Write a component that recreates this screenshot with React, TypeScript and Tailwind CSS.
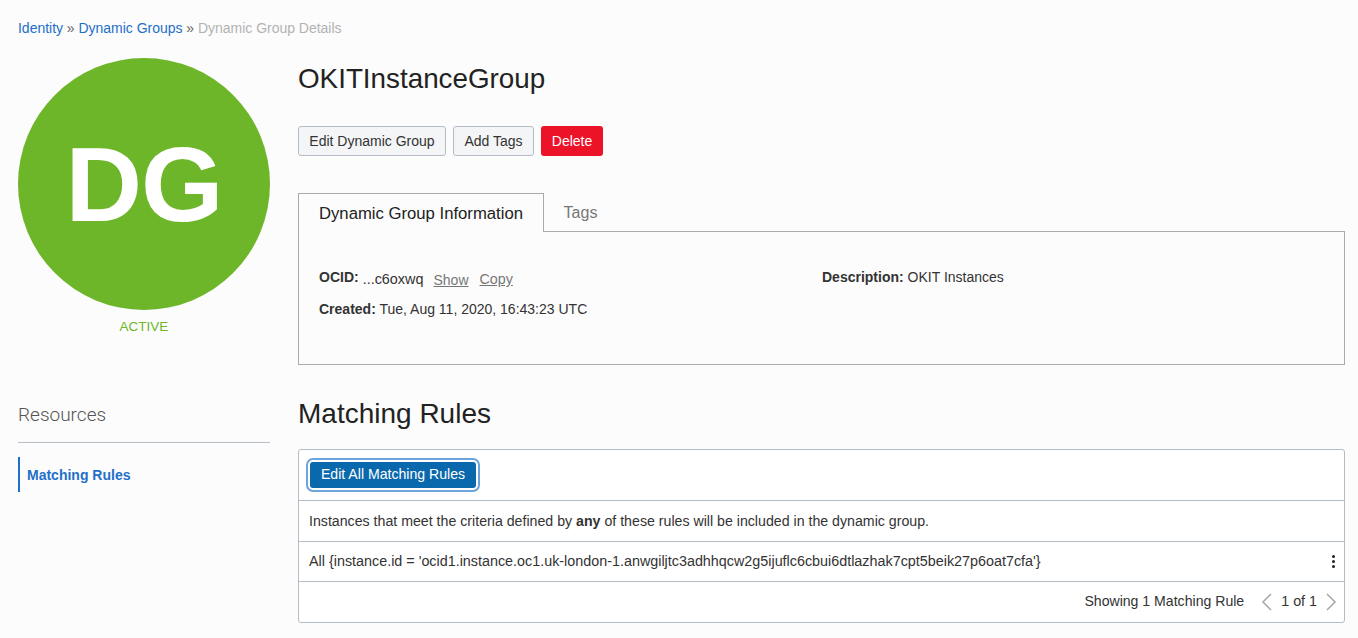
import React from "react";

export default function App() {
  return (
    <div className="w-[1358px] h-[638px] overflow-hidden bg-[#fcfcfc] pl-[18px] pr-[13px] pt-[19px] font-['Liberation_Sans',sans-serif] text-[14px] text-[#333333]">
      {/* Breadcrumbs */}
      <div className="h-[18px] leading-[18px] text-[14px] tracking-[-0.02px] text-[#b3b3b3]">
        <a className="text-[#1f6fc9]">Identity</a>
        <span className="text-[#666666]"> » </span>
        <a className="text-[#1f6fc9]">Dynamic Groups</a>
        <span className="text-[#666666]"> » </span>
        <span>Dynamic Group Details</span>
      </div>

      <div className="flex mt-[21px]">
        {/* Left column */}
        <div className="w-[252px] shrink-0">
          <div className="w-[252px] h-[252px] rounded-full bg-[#6eb629] flex items-center justify-center">
            <span className="text-white font-bold text-[106px] leading-none tracking-[-1px]">DG</span>
          </div>
          <div className="mt-[8px] text-center text-[13.5px] leading-[18px] text-[#6eb629]">ACTIVE</div>

          <div className="mt-[67px] text-[19px] leading-[24px] font-light text-[#555555] font-['Roboto',sans-serif]">Resources</div>
          <div className="mt-[15px] border-t border-[#b4bcc6]"></div>
          <div className="mt-[14px] h-[35px] border-l-2 border-[#1f6fc9] pl-[7px] pt-[2px] flex items-center text-[14px] font-bold text-[#1f6fc9]">
            Matching Rules
          </div>
        </div>

        {/* Main column */}
        <div className="ml-[28px] w-[1047px]">
          <h1 className="mt-[4px] text-[27.8px] leading-[34px] text-[#222222]">OKITInstanceGroup</h1>

          <div className="mt-[30px] flex gap-[7px]">
            <button className="h-[30px] w-[148px] rounded-[3px] border border-[#b4bcc6] bg-[#f4f5f7] text-[14px] text-[#333333]">Edit Dynamic Group</button>
            <button className="h-[30px] w-[81px] rounded-[3px] border border-[#b4bcc6] bg-[#f4f5f7] text-[14px] text-[#333333]">Add Tags</button>
            <button className="h-[30px] w-[62px] rounded-[3px] bg-[#ec1228] text-[14px] text-white">Delete</button>
          </div>

          {/* Tabs */}
          <div className="mt-[36px] flex items-end h-[39px]">
            <div className="h-[39px] w-[246px] border border-b-0 border-[#aaaaaa] bg-[#fcfcfc] pt-[2px] flex items-center justify-center text-[16.7px] text-[#222222] relative z-10 -mb-px">
              Dynamic Group Information
            </div>
            <div className="h-[38px] w-[73px] pt-[2px] flex items-center justify-center text-[16px] text-[#777777]">Tags</div>
          </div>

          <div className="h-[134px] border border-[#aaaaaa] px-[20px] pt-[38px] flex">
            <div className="w-[503px] shrink-0">
              <div className="flex items-center h-[20px]">
                <b className="font-bold -mt-[5px]">OCID:</b>
                <span className="ml-[4px] text-[14.4px]">...c6oxwq</span>
                <a className="ml-[10px] underline text-[#777777]">Show</a>
                <a className="ml-[11px] underline text-[#777777] text-[14.3px]">Copy</a>
              </div>
              <div className="mt-[9px] h-[20px] leading-[20px]">
                <b className="font-bold">Created:</b> Tue, Aug 11, 2020, 16:43:23 UTC
              </div>
            </div>
            <div className="h-[20px] leading-[20px] -mt-[3px]">
              <b className="font-bold">Description:</b> OKIT Instances
            </div>
          </div>

          <h2 className="mt-[32px] text-[28px] leading-[34px] text-[#222222]">Matching Rules</h2>

          {/* Rules table */}
          <div className="mt-[18px] h-[174px] rounded-[3px] border border-[#b4bcc6] bg-white flex flex-col">
            <div className="h-[51px] shrink-0 border-b border-[#b4bcc6] pl-[11px] flex items-center">
              <button className="h-[26px] w-[166px] rounded-[3px] bg-[#0a68ad] text-white text-[14.1px] ring-2 ring-white outline-2 outline-offset-2 outline-[#6ea4dd]">
                Edit All Matching Rules
              </button>
            </div>
            <div className="h-[41px] shrink-0 border-b border-[#b4bcc6] pl-[10px] pt-[2px] flex items-center">
              <span className="text-[14.18px]">Instances that meet the criteria defined by <b className="font-bold">any</b> of these rules will be included in the dynamic group.</span>
            </div>
            <div className="h-[40px] shrink-0 border-b border-[#b4bcc6] pl-[10px] pr-[9px] flex items-center justify-between">
              <span className="text-[14.35px]">All {"{"}instance.id = 'ocid1.instance.oc1.uk-london-1.anwgiljtc3adhhqcw2g5ijuflc6cbui6dtlazhak7cpt5beik27p6oat7cfa'{"}"}</span>
              <span className="flex flex-col gap-[2px]">
                <i className="block w-[3px] h-[3px] rounded-full bg-[#222222]"></i>
                <i className="block w-[3px] h-[3px] rounded-full bg-[#222222]"></i>
                <i className="block w-[3px] h-[3px] rounded-full bg-[#222222]"></i>
              </span>
            </div>
            <div className="flex-1 pr-[7px] flex items-center justify-end">
              <span className="text-[14.1px]">Showing 1 Matching Rule</span>
              <svg className="ml-[17px] w-[11px] h-[18px] text-[#a6a6a6]" viewBox="0 0 11 18" fill="none" stroke="currentColor" strokeWidth="1.5"><path d="M10 1 L2 9 L10 17" /></svg>
              <span className="ml-[9px] text-[14.3px]">1 of 1</span>
              <svg className="ml-[9px] w-[11px] h-[18px] text-[#a6a6a6]" viewBox="0 0 11 18" fill="none" stroke="currentColor" strokeWidth="1.5"><path d="M1 1 L9 9 L1 17" /></svg>
            </div>
          </div>
        </div>
      </div>
    </div>
  );
}
